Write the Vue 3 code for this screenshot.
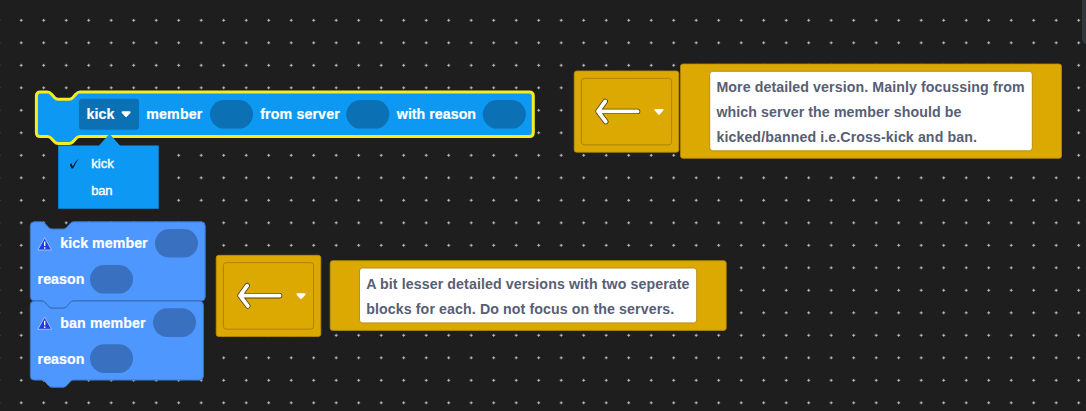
<script setup>
const PITCH = 22.5

const actionBlock = {
  labels: [
    { text: 'kick', x: 86.5, w: 28 },
    { text: 'member', x: 146.3, w: 56 },
    { text: 'from server', x: 260.2, w: 79.5 },
    { text: 'with reason', x: 396.8, w: 79.2 },
  ],
  slots: [210, 346.3, 482.8],
}

const menuItems = [
  { text: 'kick', y: 168, w: 22.5, checked: true },
  { text: 'ban', y: 195, w: 21.2, checked: false },
]

const stackBlocks = [
  { id: 'kick', y: 221.8, right: 205.2, title: 'kick member', titleWidth: 87.3, slotX: 155 },
  { id: 'ban', y: 301.1, right: 203.4, title: 'ban member', titleWidth: 85.3, slotX: 153 },
]

const arrowBlocks = [
  { id: 'upper', x: 574.2, y: 71 },
  { id: 'lower', x: 216.2, y: 255.3 },
]

const notes = [
  {
    id: 'detailed',
    x: 680.5, y: 64, w: 381, h: 94.3,
    paperX: 709.7, paperW: 322.6,
    lines: [
      { text: 'More detailed version. Mainly focussing from', w: 308.3 },
      { text: 'which server the member should be', w: 245 },
      { text: 'kicked/banned i.e.Cross-kick and ban.', w: 260.5 },
    ],
  },
  {
    id: 'simple',
    x: 330.2, y: 260.7, w: 396, h: 69.7,
    paperX: 359.5, paperW: 337.2,
    lines: [
      { text: 'A bit lesser detailed versions with two seperate', w: 323.3 },
      { text: 'blocks for each. Do not focus on the servers.', w: 308 },
    ],
  },
]

// Statement block silhouette: notch in the top edge, matching tab below.
function blockPath(x, y, r, b) {
  return `M${x} ${y + 4}q0 -4 4 -4H${x + 11}c2 0 3 .8 4 2l3.3 3.6q1.5 1.6 3.5 1.6h11q2 0 3.5 -1.6l3.3 -3.6c1 -1.2 2 -2 4 -2H${r - 4}q4 0 4 4V${b - 4}q0 4 -4 4H${x + 43.6}c-2 0 -3 .8 -4 2l-3.3 3.6q-1.5 1.6 -3.5 1.6h-11q-2 0 -3.5 -1.6l-3.3 -3.6c-1 -1.2 -2 -2 -4 -2H${x + 4}q-4 0 -4 -4Z`
}
</script>

<template>
  <main class="workspace">
    <svg class="canvas" width="1086" height="411" viewBox="0 0 1086 411">
      <defs>
        <pattern id="grid" x="9.95" y="9.05" :width="PITCH" :height="PITCH" patternUnits="userSpaceOnUse">
          <path class="dot" d="M9.75 11.25h3M11.25 9.75v3" />
        </pattern>
      </defs>
      <rect width="1086" height="411" fill="url(#grid)" />
      <rect class="scroll-edge" x="1082" y="-8" width="12" height="52" rx="5" />

      <g class="action">
        <path class="action-shape" :d="blockPath(36.4, 92.1, 533.3, 136.4)" />
        <rect class="action-slot" x="79" y="98.8" width="60" height="31" rx="3" />
        <rect v-for="x in actionBlock.slots" :key="x" class="action-slot" :x="x" y="100" width="43" height="28.6" rx="14.3" />
        <text v-for="l in actionBlock.labels" :key="l.text" class="label" :x="l.x" y="119" :textLength="l.w">{{ l.text }}</text>
        <path class="caret" d="M122.6 112.3h7l-3.5 3.8z" />
      </g>

      <g class="menu">
        <path class="menu-shape" d="M58.2 145.4H99L108.3 135.2q1.2 -1.2 2.4 0L120 145.4H158.7V208.7H58.2Z" />
        <g v-for="item in menuItems" :key="item.text">
          <path v-if="item.checked" class="check" d="M69.8 164.8 71.2 163.2 72.8 166.4 Q75 161.5 78.8 158.8 Q75.4 163.3 73.1 168.6 L71.6 168.6Z" />
          <text class="menu-label" x="91.2" :y="item.y" :textLength="item.w">{{ item.text }}</text>
        </g>
      </g>

      <g v-for="b in stackBlocks" :key="b.id" class="stack">
        <path class="stack-shape" :d="blockPath(30.3, b.y, b.right, b.y + 79)" />
        <g :transform="`translate(44.7 ${b.y + 22.2})`">
          <path class="warn-sign" d="M0 -6.3 6.9 6H-6.9Z" />
          <path class="warn-mark" d="M0 -2.6V1.9M0 3.2V4.7" />
        </g>
        <text class="label" x="60.3" :y="b.y + 26.5" :textLength="b.titleWidth">{{ b.title }}</text>
        <rect class="stack-slot" :x="b.slotX" :y="b.y + 7.2" width="43" height="28.6" rx="14.3" />
        <text class="label" x="37.6" :y="b.y + 62.5" textLength="46.7">reason</text>
        <rect class="stack-slot" x="90" :y="b.y + 43.2" width="43" height="28.6" rx="14.3" />
      </g>

      <g v-for="a in arrowBlocks" :key="a.id" :transform="`translate(${a.x} ${a.y})`">
        <rect class="gold" width="104.6" height="81.2" rx="2.5" />
        <rect class="gold-frame" x="7.2" y="7.3" width="90.2" height="66.6" rx="3" />
        <path class="arrow-edge" d="M63.4 40.4H24M31 30.4 23.8 40.4 31.6 50.6" />
        <path class="arrow" d="M63.4 40.4H24M31 30.4 23.8 40.4 31.6 50.6" />
        <path class="caret" d="M81.3 38.9h7l-3.5 3.8z" />
      </g>

      <g v-for="n in notes" :key="n.id">
        <rect class="gold" :x="n.x" :y="n.y" :width="n.w" :height="n.h" rx="2.5" />
        <rect class="paper" :x="n.paperX" :y="n.y + 7.3" :width="n.paperW" :height="n.h - 14.8" rx="3" />
        <text
          v-for="(line, i) in n.lines"
          :key="line.text"
          class="note-text"
          :x="n.paperX + 6.7"
          :y="n.y + 28.3 + i * 25"
          :textLength="line.w"
        >{{ line.text }}</text>
      </g>
    </svg>
  </main>
</template>

<style>
body {
  margin: 0;
  background: #1e1e1e;
}
</style>

<style scoped>
.workspace {
  width: 1086px;
  height: 411px;
  overflow: hidden;
  background: #1e1e1e;
  font-family: "Liberation Sans", Arial, sans-serif;
}
.canvas {
  display: block;
}
.dot {
  stroke: #bcbcbc;
  stroke-width: 1;
}
.scroll-edge {
  fill: #33363b;
}
.label,
.note-text {
  font-size: 14.2px;
  font-weight: 700;
}
.label {
  fill: #fff;
  stroke: #fff;
  stroke-width: 0.2;
}
.note-text {
  fill: #575e75;
}
.menu-label {
  font-size: 13px;
  fill: #fff;
  stroke: #fff;
  stroke-width: 0.4;
}
.action-shape {
  fill: #0c98f3;
  stroke: #f4ee20;
  stroke-width: 3;
}
.action-slot {
  fill: #0c70b5;
}
.menu-shape {
  fill: #0c98f3;
}
.check {
  fill: #07131e;
}
.caret {
  fill: #fff;
  stroke: #fff;
  stroke-width: 2;
  stroke-linejoin: round;
}
.stack-shape {
  fill: #4d97ff;
  stroke: #3a75c4;
  stroke-width: 1;
}
.stack-slot {
  fill: #3970c0;
}
.warn-sign {
  fill: #1f3fe0;
  stroke: #a9c6f8;
  stroke-width: 0.9;
  stroke-linejoin: round;
}
.warn-mark {
  stroke: #fff;
  stroke-width: 1.4;
}
.gold {
  fill: #dca903;
  stroke: #b88d05;
  stroke-width: 0.8;
}
.gold-frame {
  fill: none;
  stroke: #a67f05;
  stroke-width: 0.9;
}
.paper {
  fill: #fff;
  stroke: #b48a08;
  stroke-width: 0.9;
}
.arrow,
.arrow-edge {
  fill: none;
  stroke-linecap: round;
  stroke-linejoin: round;
}
.arrow-edge {
  stroke: #51430f;
  stroke-width: 5.4;
}
.arrow {
  stroke: #fff;
  stroke-width: 3.8;
}
</style>
